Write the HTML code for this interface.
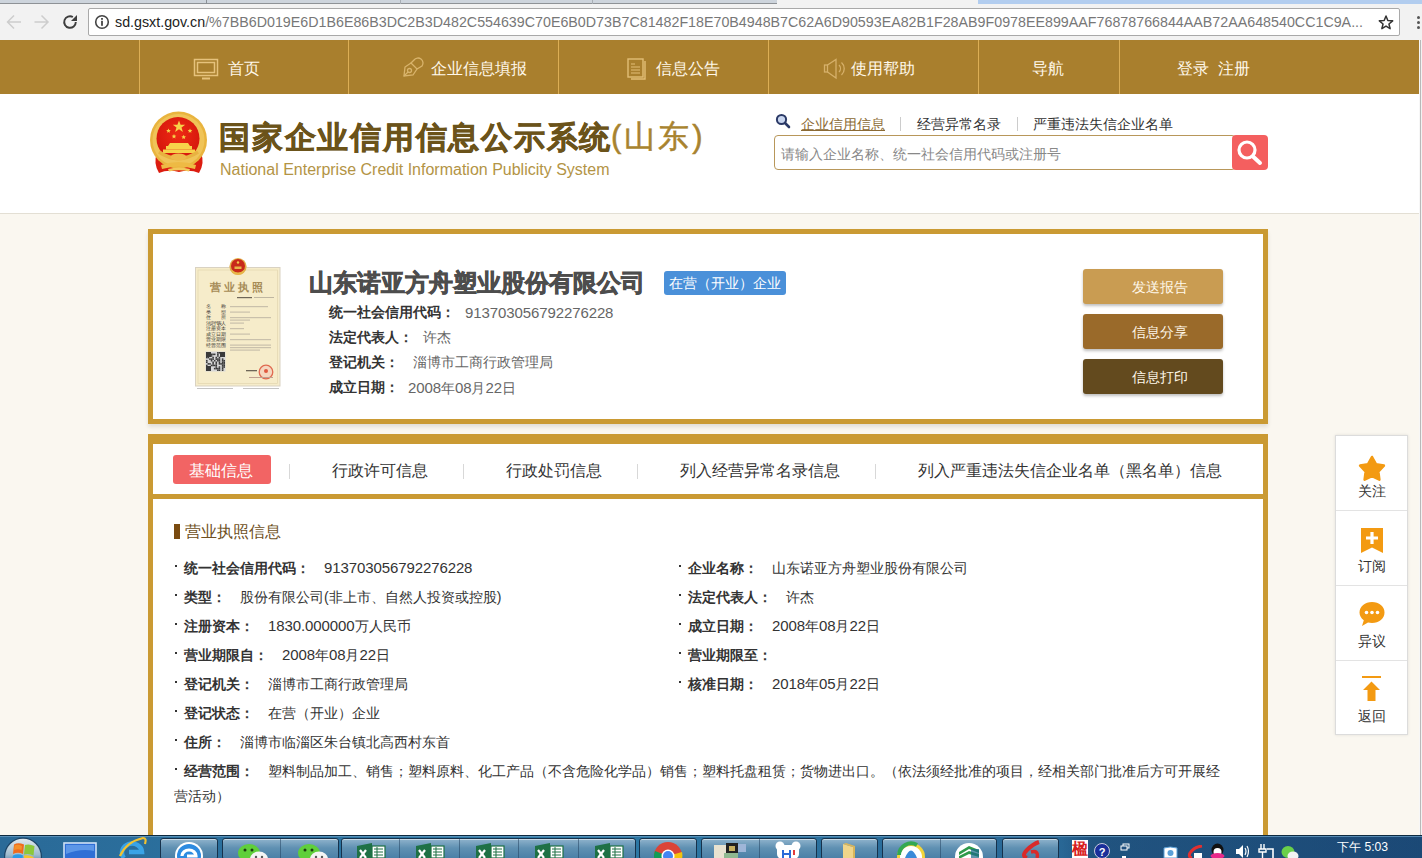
<!DOCTYPE html>
<html><head><meta charset="utf-8">
<style>
*{margin:0;padding:0;box-sizing:border-box}
html,body{width:1422px;height:858px;overflow:hidden}
body{position:relative;background:#faf7f0;font-family:"Liberation Sans",sans-serif;font-size:14px;color:#333}
.abs{position:absolute}
/* browser chrome */
#tabs{left:0;top:0;width:1422px;height:4px;background:#cdd4dc;border-bottom:1px solid #8e9296}
#tabs .act{position:absolute;left:777px;top:0;width:201px;height:4px;background:#f2f2f2}
#tabs .blue{position:absolute;left:978px;top:0;width:444px;height:4px;background:#b2cdef}
#toolbar{left:0;top:4px;width:1422px;height:36px;background:#f2f2f2}
#addr{left:88px;top:8px;width:1312px;height:28px;background:#fff;border:1px solid #a9a9a9;border-radius:2px}
#url{left:115px;top:13px;font-size:15px;color:#222;white-space:nowrap;transform-origin:0 0;transform:scaleX(0.951)}
#url span{color:#777}
/* nav */
#nav{left:0;top:40px;width:1419px;height:54px;background:#a97f2d}
#nav .sep{position:absolute;top:0;width:1px;height:54px;background:#dcae55}
#nav .it{position:absolute;top:2px;height:54px;line-height:54px;font-size:16px;color:#fff8ea;white-space:nowrap}
#scroll{left:1419px;top:40px;width:3px;height:795px;background:linear-gradient(90deg,#f7f7f7 0 1px,#b8b8b8 1px 2px,#f2f2f2 2px)}
/* header */
#hdr{left:0;top:94px;width:1419px;height:120px;background:#fff;border-bottom:1px solid #e3dfd4}
/* cards */
.card{position:absolute;left:148px;width:1120px;background:#fff;border:5px solid #ca9a33;box-shadow:0 3px 4px rgba(0,0,0,0.1)}
.lbl{position:absolute;font-weight:bold;color:#333;white-space:nowrap}
.val{position:absolute;color:#666;white-space:nowrap}
.dg{font-size:15px;letter-spacing:-0.1px}
.btn{position:absolute;left:1083px;width:140px;height:35px;border-radius:3px;color:#fff8ea;font-size:14px;line-height:35px;padding-top:1px;padding-left:49px;box-shadow:0 2px 3px rgba(0,0,0,0.25)}
.tab{position:absolute;top:456px;height:29px;line-height:29px;font-size:16px;color:#333;white-space:nowrap}
.tsep{position:absolute;top:464px;width:1px;height:15px;background:#d8d8d8}
.row{position:absolute;height:20px;line-height:20px;white-space:nowrap;font-size:14px}
.row b{color:#333}
.row i{font-style:normal;color:#333}
.dot{position:absolute;width:2px;height:2px;background:#333}
/* side toolbar */
#side{left:1335px;top:435px;width:73px;height:300px;background:#fff;border:1px solid #dcdcdc;box-shadow:0 0 3px rgba(0,0,0,0.1)}
#side .c{position:absolute;left:0;width:71px;height:75px;text-align:center}
#side .c span{position:absolute;left:0;width:71px;top:47px;font-size:14px;color:#333}
#side .ln{position:absolute;left:0;width:71px;height:1px;background:#e3e3e3}
/* taskbar */
#task{left:0;top:835px;width:1422px;height:23px;background:linear-gradient(90deg,#2a6a98,#2d7aa6 40%,#2a6a98 70%,#1f5585);border-top:1px solid #0d2a40}
</style></head><body>

<div id="tabs" class="abs"><div class="act"></div><div class="blue"></div><div style="position:absolute;left:206px;top:0;width:1px;height:4px;background:#8a9096"></div><div style="position:absolute;left:400px;top:0;width:1px;height:4px;background:#a8aeb5"></div><div style="position:absolute;left:592px;top:0;width:1px;height:4px;background:#a8aeb5"></div></div>
<div id="toolbar" class="abs"></div>
<!-- back / fwd / reload -->
<svg class="abs" style="left:5px;top:12px" width="80" height="22" viewBox="0 0 80 22">
  <g fill="none" stroke="#cdcdcd" stroke-width="1.5">
    <path d="M16 10H3M9 3.5L2.5 10L9 16.5"/>
    <path d="M29.5 10H43M36.5 3.5L43 10L36.5 16.5"/>
  </g>
  <path d="M70.8 10A5.8 5.8 0 1 1 67.9 4.98" fill="none" stroke="#3d3d3d" stroke-width="1.9"/>
  <path d="M72 3L72 9L66 9Z" fill="#3d3d3d"/>
</svg>
<div id="addr" class="abs"></div>
<svg class="abs" style="left:94px;top:14px" width="16" height="16" viewBox="0 0 16 16">
  <circle cx="8" cy="8" r="6.3" fill="none" stroke="#444" stroke-width="1.6"/>
  <rect x="7.1" y="6.8" width="1.8" height="5" fill="#444"/><rect x="7.1" y="4" width="1.8" height="1.8" fill="#444"/>
</svg>
<div id="url" class="abs">sd.gsxt.gov.cn<span>/%7BB6D019E6D1B6E86B3DC2B3D482C554639C70E6B0D73B7C81482F18E70B4948B7C62A6D90593EA82B1F28AB9F0978EE899AAF76878766844AAB72AA648540CC1C9A...</span></div>
<svg class="abs" style="left:1377px;top:13px" width="18" height="18" viewBox="0 0 18 18">
  <path d="M9.00 3.00L10.82 7.49L15.66 7.84L11.95 10.96L13.11 15.66L9.00 13.10L4.89 15.66L6.05 10.96L2.34 7.84L7.18 7.49Z" fill="none" stroke="#333" stroke-width="1.5" stroke-linejoin="round"/>
</svg>

<!-- NAV -->
<div class="abs" style="left:1417px;top:16px;width:3px;height:3px;background:#555;border-radius:50%"></div><div class="abs" style="left:1417px;top:21px;width:3px;height:3px;background:#555;border-radius:50%"></div><div class="abs" style="left:1417px;top:26px;width:3px;height:3px;background:#555;border-radius:50%"></div>
<div id="nav" class="abs">
  <div class="sep" style="left:139px"></div>
  <div class="sep" style="left:348px"></div>
  <div class="sep" style="left:558px"></div>
  <div class="sep" style="left:768px"></div>
  <div class="sep" style="left:978px"></div>
  <div class="sep" style="left:1119px"></div>
  <div class="it" style="left:228px">首页</div>
  <div class="it" style="left:431px">企业信息填报</div>
  <div class="it" style="left:656px">信息公告</div>
  <div class="it" style="left:851px">使用帮助</div>
  <div class="it" style="left:1032px">导航</div>
  <div class="it" style="left:1177px">登录&nbsp; 注册</div>
</div>
<div id="scroll" class="abs"></div>
<svg class="abs" style="left:192px;top:57px" width="28" height="24" viewBox="0 0 28 24" fill="none" stroke="#e6c27c" stroke-width="1.5">
  <rect x="2.5" y="2.5" width="23" height="16"/><rect x="5.5" y="5.5" width="17" height="10"/><path d="M10 21.5H18" stroke-width="2"/>
</svg>
<svg class="abs" style="left:402px;top:56px" width="26" height="24" viewBox="0 0 26 24" fill="none" stroke="#d9b46c" stroke-width="1.3">
  <path d="M9 7L3 11L2 20L11 19L15 13"/><circle cx="7.5" cy="14.5" r="2"/><path d="M2 20L6 16"/><path d="M12 4A5 5 0 0 1 20 10L15 13L9 7Z"/>
</svg>
<svg class="abs" style="left:625px;top:57px" width="22" height="24" viewBox="0 0 22 24" fill="none" stroke="#e2be76" stroke-width="1.4">
  <rect x="3" y="2" width="15" height="18"/><path d="M20 4V22H6" /><path d="M6 7H10M6 10H15M6 13H15M6 16H15" stroke-width="1"/>
</svg>
<svg class="abs" style="left:823px;top:57px" width="24" height="24" viewBox="0 0 24 24" fill="none" stroke="#d6b06a" stroke-width="1.3">
  <rect x="1.5" y="8" width="3" height="7"/><path d="M4.5 8L13 2.5V21L4.5 15"/><path d="M16 8A5 5 0 0 1 16 15M18.5 5.5A8.5 8.5 0 0 1 18.5 18"/>
</svg>

<!-- HEADER -->
<div id="hdr" class="abs"></div>
<svg class="abs" style="left:148px;top:109px" width="62" height="68" viewBox="0 0 62 68">
  <defs>
    <radialGradient id="rg" cx="50%" cy="40%" r="60%"><stop offset="0" stop-color="#ee2a14"/><stop offset="1" stop-color="#d4160c"/></radialGradient>
  </defs>
  <path d="M9 44 Q5 54 11 64 Q20 60 31 63 Q42 60 51 64 Q57 54 53 44 Z" fill="#dc1c10"/>
  <circle cx="30.5" cy="31" r="28.5" fill="#e9b43e"/>
  <circle cx="30.5" cy="31" r="26" fill="#f0c458"/>
  <circle cx="30" cy="29.5" r="21.5" fill="url(#rg)"/>
  <g fill="#f7d24a">
    <path d="M31 11.5l1.6 4.3h4.6l-3.7 2.7 1.4 4.4-3.9-2.7-3.9 2.7 1.4-4.4-3.7-2.7h4.6z"/>
    <path d="M20.5 19.4l0.7 1.5 1.6 0.2-1.2 1.1 0.3 1.6-1.4-0.8-1.4 0.8 0.3-1.6-1.2-1.1 1.6-0.2z"/>
    <path d="M26 25l0.7 1.5 1.6 0.2-1.2 1.1 0.3 1.6-1.4-0.8-1.4 0.8 0.3-1.6-1.2-1.1 1.6-0.2z"/>
    <path d="M35.7 25.7l0.7 1.5 1.6 0.2-1.2 1.1 0.3 1.6-1.4-0.8-1.4 0.8 0.3-1.6-1.2-1.1 1.6-0.2z"/>
    <path d="M42 19.4l0.7 1.5 1.6 0.2-1.2 1.1 0.3 1.6-1.4-0.8-1.4 0.8 0.3-1.6-1.2-1.1 1.6-0.2z"/>
    <path d="M22 34 H40 L42 37 H20 Z"/>
    <rect x="18" y="37" width="26" height="3.5"/>
    <rect x="15" y="40.5" width="32" height="3.5"/>
  </g>
  <path d="M11 43 Q30 56 50 43" fill="none" stroke="#e8b240" stroke-width="3.5"/>
  <ellipse cx="30.5" cy="48" rx="8" ry="3.5" fill="#eeb94a"/>
  <path d="M13 56 Q31 50 48 56 L47 60 Q31 55 14 60 Z" fill="#eeba44"/>
  <path d="M20 60 Q31 57 42 60 L41 62.5 Q31 60 21 62.5Z" fill="#f3c85a"/>
</svg>
<div class="abs" id="ttl" style="left:219px;top:117px;font-size:31px;font-weight:bold;color:#6b531a;-webkit-text-stroke:0.6px #6b531a;white-space:nowrap;letter-spacing:1.75px">国家企业信用信息公示系统</div><div class="abs" id="ttl2" style="left:611px;top:116px;font-size:31px;color:#a8832f;white-space:nowrap;letter-spacing:3px;-webkit-text-stroke:0.5px #a8832f">(山东)</div>
<div class="abs" id="ettl" style="left:220px;top:161px;font-size:16px;color:#b39445;white-space:nowrap">National Enterprise Credit Information Publicity System</div>
<svg class="abs" style="left:775px;top:113px" width="16" height="16" viewBox="0 0 16 16">
  <circle cx="6.5" cy="6.5" r="4.6" fill="#c9d6ef" stroke="#2b3a67" stroke-width="2"/>
  <path d="M10 10L14 14" stroke="#2b3a67" stroke-width="2.6" stroke-linecap="round"/>
</svg>
<div class="abs" style="left:801px;top:116px;font-size:14px;color:#8b6a34;text-decoration:underline;white-space:nowrap">企业信用信息</div>
<div class="abs" style="left:900px;top:117px;width:1px;height:14px;background:#ccc"></div>
<div class="abs" style="left:917px;top:116px;font-size:14px;color:#333;white-space:nowrap">经营异常名录</div>
<div class="abs" style="left:1017px;top:117px;width:1px;height:14px;background:#ccc"></div>
<div class="abs" style="left:1033px;top:116px;font-size:14px;color:#333;white-space:nowrap">严重违法失信企业名单</div>
<div class="abs" style="left:774px;top:135px;width:462px;height:35px;border:1px solid #b8975a;border-radius:4px;background:#fff"></div>
<div class="abs" style="left:781px;top:146px;font-size:14px;color:#888;white-space:nowrap">请输入企业名称、统一社会信用代码或注册号</div>
<div class="abs" style="left:1232px;top:135px;width:36px;height:35px;background:#f45f5f;border-radius:4px"></div>
<svg class="abs" style="left:1235px;top:138px" width="30" height="30" viewBox="0 0 30 30">
  <circle cx="12" cy="12" r="8" fill="none" stroke="#fff" stroke-width="3.2"/>
  <path d="M18 18.5L25 25" stroke="#fff" stroke-width="4" stroke-linecap="round"/>
</svg>

<!-- CARD 1 -->
<div class="card" style="top:229px;height:195px"></div>
<!-- license image -->
<svg class="abs" style="left:193px;top:255px" width="92" height="138" viewBox="0 0 92 138" font-family="Liberation Sans, sans-serif">
  <rect x="2.5" y="12.5" width="84.5" height="118.5" fill="#f6ecca" stroke="#d9d2c2" stroke-width="1"/>
  <rect x="5" y="15" width="79.5" height="113.5" fill="none" stroke="#e3d6b0" stroke-width="0.7"/>
  <circle cx="45" cy="11.5" r="8.6" fill="#e2ae48"/>
  <circle cx="45" cy="11" r="7" fill="#c82a1a"/>
  <path d="M39 15Q45 20 51 15L50.5 18Q45 21.5 39.5 18Z" fill="#e8b648"/>
  <rect x="41.5" y="11.5" width="7" height="2.5" fill="#e8b648"/>
  <circle cx="45" cy="7.5" r="1.2" fill="#f2c84a"/>
  <text x="45" y="36" font-size="10.5" fill="#a58a55" text-anchor="middle" letter-spacing="3.2" font-weight="bold">营业执照</text>
  <rect x="44" y="42" width="15" height="1.2" fill="#6e6658"/><rect x="61" y="42" width="20" height="0.9" fill="#b9b09c"/>
  <text x="13" y="53.0" font-size="4.6" fill="#3a3530" textLength="20" lengthAdjust="spacing">名　　称</text><text x="13" y="58.5" font-size="4.6" fill="#3a3530" textLength="20" lengthAdjust="spacing">类　　型</text><text x="13" y="64.0" font-size="4.6" fill="#3a3530" textLength="20" lengthAdjust="spacing">住　　所</text><text x="13" y="69.5" font-size="4.6" fill="#3a3530" textLength="20" lengthAdjust="spacing">法定代表人</text><text x="13" y="75.0" font-size="4.6" fill="#3a3530" textLength="20" lengthAdjust="spacing">注册资本</text><text x="13" y="80.5" font-size="4.6" fill="#3a3530" textLength="20" lengthAdjust="spacing">成立日期</text><text x="13" y="86.0" font-size="4.6" fill="#3a3530" textLength="20" lengthAdjust="spacing">营业期限</text><text x="13" y="91.5" font-size="4.6" fill="#3a3530" textLength="20" lengthAdjust="spacing">经营范围</text>
  <g fill="#c9c0ab">
    <rect x="37" y="51" width="38" height="1.2"/><rect x="37" y="56.5" width="20" height="1.2"/><rect x="37" y="62" width="41" height="1.2"/><rect x="37" y="64.5" width="20" height="1.2"/><rect x="37" y="67.5" width="14" height="1.2"/>
    <rect x="37" y="73" width="14" height="1.2"/><rect x="37" y="78.5" width="20" height="1.2"/><rect x="37" y="84" width="41" height="1.2"/><rect x="37" y="89.5" width="41" height="1.2"/><rect x="37" y="92" width="41" height="1.2"/><rect x="37" y="94.5" width="30" height="1.2"/>
  </g>
  <rect x="12.5" y="96.5" width="20" height="20" fill="#d8d8d8"/>
  <g fill="#3a3a3a"><rect x="13.00" y="97.00" width="1.58" height="1.58"/><rect x="13.00" y="98.58" width="1.58" height="1.58"/><rect x="13.00" y="101.75" width="1.58" height="1.58"/><rect x="13.00" y="104.92" width="1.58" height="1.58"/><rect x="13.00" y="106.50" width="1.58" height="1.58"/><rect x="13.00" y="109.67" width="1.58" height="1.58"/><rect x="13.00" y="111.25" width="1.58" height="1.58"/><rect x="13.00" y="112.83" width="1.58" height="1.58"/><rect x="13.00" y="114.42" width="1.58" height="1.58"/><rect x="14.58" y="97.00" width="1.58" height="1.58"/><rect x="14.58" y="100.17" width="1.58" height="1.58"/><rect x="14.58" y="101.75" width="1.58" height="1.58"/><rect x="14.58" y="108.08" width="1.58" height="1.58"/><rect x="14.58" y="111.25" width="1.58" height="1.58"/><rect x="14.58" y="114.42" width="1.58" height="1.58"/><rect x="16.17" y="97.00" width="1.58" height="1.58"/><rect x="16.17" y="98.58" width="1.58" height="1.58"/><rect x="16.17" y="100.17" width="1.58" height="1.58"/><rect x="16.17" y="103.33" width="1.58" height="1.58"/><rect x="16.17" y="108.08" width="1.58" height="1.58"/><rect x="16.17" y="111.25" width="1.58" height="1.58"/><rect x="16.17" y="112.83" width="1.58" height="1.58"/><rect x="16.17" y="114.42" width="1.58" height="1.58"/><rect x="17.75" y="98.58" width="1.58" height="1.58"/><rect x="17.75" y="100.17" width="1.58" height="1.58"/><rect x="17.75" y="103.33" width="1.58" height="1.58"/><rect x="17.75" y="104.92" width="1.58" height="1.58"/><rect x="17.75" y="109.67" width="1.58" height="1.58"/><rect x="19.33" y="98.58" width="1.58" height="1.58"/><rect x="19.33" y="101.75" width="1.58" height="1.58"/><rect x="19.33" y="103.33" width="1.58" height="1.58"/><rect x="19.33" y="106.50" width="1.58" height="1.58"/><rect x="19.33" y="108.08" width="1.58" height="1.58"/><rect x="19.33" y="109.67" width="1.58" height="1.58"/><rect x="20.92" y="98.58" width="1.58" height="1.58"/><rect x="20.92" y="104.92" width="1.58" height="1.58"/><rect x="20.92" y="109.67" width="1.58" height="1.58"/><rect x="20.92" y="112.83" width="1.58" height="1.58"/><rect x="22.50" y="101.75" width="1.58" height="1.58"/><rect x="22.50" y="103.33" width="1.58" height="1.58"/><rect x="22.50" y="106.50" width="1.58" height="1.58"/><rect x="22.50" y="108.08" width="1.58" height="1.58"/><rect x="22.50" y="109.67" width="1.58" height="1.58"/><rect x="22.50" y="111.25" width="1.58" height="1.58"/><rect x="22.50" y="112.83" width="1.58" height="1.58"/><rect x="24.08" y="97.00" width="1.58" height="1.58"/><rect x="24.08" y="98.58" width="1.58" height="1.58"/><rect x="24.08" y="100.17" width="1.58" height="1.58"/><rect x="24.08" y="103.33" width="1.58" height="1.58"/><rect x="24.08" y="104.92" width="1.58" height="1.58"/><rect x="24.08" y="112.83" width="1.58" height="1.58"/><rect x="24.08" y="114.42" width="1.58" height="1.58"/><rect x="25.67" y="97.00" width="1.58" height="1.58"/><rect x="25.67" y="101.75" width="1.58" height="1.58"/><rect x="25.67" y="103.33" width="1.58" height="1.58"/><rect x="25.67" y="104.92" width="1.58" height="1.58"/><rect x="25.67" y="106.50" width="1.58" height="1.58"/><rect x="25.67" y="108.08" width="1.58" height="1.58"/><rect x="25.67" y="111.25" width="1.58" height="1.58"/><rect x="25.67" y="112.83" width="1.58" height="1.58"/><rect x="25.67" y="114.42" width="1.58" height="1.58"/><rect x="27.25" y="97.00" width="1.58" height="1.58"/><rect x="27.25" y="108.08" width="1.58" height="1.58"/><rect x="28.83" y="97.00" width="1.58" height="1.58"/><rect x="28.83" y="98.58" width="1.58" height="1.58"/><rect x="28.83" y="100.17" width="1.58" height="1.58"/><rect x="28.83" y="103.33" width="1.58" height="1.58"/><rect x="28.83" y="104.92" width="1.58" height="1.58"/><rect x="28.83" y="106.50" width="1.58" height="1.58"/><rect x="28.83" y="108.08" width="1.58" height="1.58"/><rect x="28.83" y="109.67" width="1.58" height="1.58"/><rect x="28.83" y="111.25" width="1.58" height="1.58"/><rect x="28.83" y="112.83" width="1.58" height="1.58"/><rect x="28.83" y="114.42" width="1.58" height="1.58"/><rect x="30.42" y="97.00" width="1.58" height="1.58"/><rect x="30.42" y="98.58" width="1.58" height="1.58"/><rect x="30.42" y="100.17" width="1.58" height="1.58"/><rect x="30.42" y="104.92" width="1.58" height="1.58"/><rect x="30.42" y="106.50" width="1.58" height="1.58"/><rect x="30.42" y="108.08" width="1.58" height="1.58"/><rect x="30.42" y="109.67" width="1.58" height="1.58"/><rect x="30.42" y="111.25" width="1.58" height="1.58"/><rect x="13" y="97" width="5" height="5"/><rect x="27" y="97" width="5" height="5"/><rect x="13" y="111" width="5" height="5"/></g>
  <circle cx="73" cy="117" r="6.8" fill="#f5d8c0" stroke="#e06a50" stroke-width="1.3"/><circle cx="73" cy="116" r="2" fill="#e05a40"/>
  <rect x="53" y="115" width="11" height="1.3" fill="#6e6658"/><rect x="56" y="122" width="24" height="1" fill="#c0a090"/>
  <rect x="4" y="133" width="36" height="1" fill="#c4c4c4"/><rect x="50" y="133" width="36" height="1" fill="#c4c4c4"/>
</svg>
<div class="abs" id="cname" style="left:309px;top:267px;font-size:24px;font-weight:bold;color:#4d4d4d;-webkit-text-stroke:0.7px #4d4d4d;white-space:nowrap">山东诺亚方舟塑业股份有限公司</div>
<div class="abs" style="left:664px;top:271px;width:122px;height:24px;background:#4a90d9;border-radius:3px;color:#fff;font-size:14px;line-height:24px;padding-left:5px;white-space:nowrap">在营（开业）企业</div>
<div class="lbl" style="left:329px;top:304px">统一社会信用代码：</div><div class="val dg" style="left:465px;top:304px">913703056792276228</div>
<div class="lbl" style="left:329px;top:329px">法定代表人：</div><div class="val" style="left:423px;top:329px">许杰</div>
<div class="lbl" style="left:329px;top:354px">登记机关：</div><div class="val" style="left:413px;top:354px">淄博市工商行政管理局</div>
<div class="lbl" style="left:329px;top:379px">成立日期：</div><div class="val" style="left:408px;top:379px"><span class="dg">2008</span>年<span class="dg">08</span>月<span class="dg">22</span>日</div>
<div class="btn" style="top:269px;background:#c99c52">发送报告</div>
<div class="btn" style="top:314px;background:#9a6a2a">信息分享</div>
<div class="btn" style="top:359px;background:#634a1e">信息打印</div>

<!-- CARD 2 -->
<div class="card" style="top:434px;height:430px;border-top-width:10px;box-shadow:none"></div>
<div class="abs" style="left:153px;top:494px;width:1110px;height:5px;background:#ca9a33"></div>
<div class="abs" style="left:173px;top:455px;width:98px;height:29px;background:#f26464;border-radius:3px"></div>
<div class="tab" style="left:189px;color:#fff">基础信息</div>
<div class="tsep" style="left:289px"></div>
<div class="tab" style="left:332px">行政许可信息</div>
<div class="tsep" style="left:463px"></div>
<div class="tab" style="left:506px">行政处罚信息</div>
<div class="tsep" style="left:637px"></div>
<div class="tab" style="left:680px">列入经营异常名录信息</div>
<div class="tsep" style="left:875px"></div>
<div class="tab" style="left:918px">列入严重违法失信企业名单（黑名单）信息</div>
<div class="abs" style="left:174px;top:524px;width:6px;height:15px;background:#7a4b10"></div>
<div class="abs" style="left:185px;top:522px;font-size:16px;color:#6e4f22;white-space:nowrap">营业执照信息</div>
<div class="dot" style="left:175px;top:565px"></div><div class="row" style="left:184px;top:558px"><b>统一社会信用代码：</b></div><div class="row" style="left:324px;top:558px"><i><span class="dg">913703056792276228</span></i></div><div class="dot" style="left:679px;top:565px"></div><div class="row" style="left:688px;top:558px"><b>企业名称：</b></div><div class="row" style="left:772px;top:558px"><i>山东诺亚方舟塑业股份有限公司</i></div>
<div class="dot" style="left:175px;top:594px"></div><div class="row" style="left:184px;top:587px"><b>类型：</b></div><div class="row" style="left:240px;top:587px"><i>股份有限公司(非上市、自然人投资或控股)</i></div><div class="dot" style="left:679px;top:594px"></div><div class="row" style="left:688px;top:587px"><b>法定代表人：</b></div><div class="row" style="left:786px;top:587px"><i>许杰</i></div>
<div class="dot" style="left:175px;top:623px"></div><div class="row" style="left:184px;top:616px"><b>注册资本：</b></div><div class="row" style="left:268px;top:616px"><i><span class="dg">1830.000000</span>万人民币</i></div><div class="dot" style="left:679px;top:623px"></div><div class="row" style="left:688px;top:616px"><b>成立日期：</b></div><div class="row" style="left:772px;top:616px"><i><span class="dg">2008</span>年<span class="dg">08</span>月<span class="dg">22</span>日</i></div>
<div class="dot" style="left:175px;top:652px"></div><div class="row" style="left:184px;top:645px"><b>营业期限自：</b></div><div class="row" style="left:282px;top:645px"><i><span class="dg">2008</span>年<span class="dg">08</span>月<span class="dg">22</span>日</i></div><div class="dot" style="left:679px;top:652px"></div><div class="row" style="left:688px;top:645px"><b>营业期限至：</b></div>
<div class="dot" style="left:175px;top:681px"></div><div class="row" style="left:184px;top:674px"><b>登记机关：</b></div><div class="row" style="left:268px;top:674px"><i>淄博市工商行政管理局</i></div><div class="dot" style="left:679px;top:681px"></div><div class="row" style="left:688px;top:674px"><b>核准日期：</b></div><div class="row" style="left:772px;top:674px"><i><span class="dg">2018</span>年<span class="dg">05</span>月<span class="dg">22</span>日</i></div>
<div class="dot" style="left:175px;top:710px"></div><div class="row" style="left:184px;top:703px"><b>登记状态：</b></div><div class="row" style="left:268px;top:703px"><i>在营（开业）企业</i></div>
<div class="dot" style="left:175px;top:739px"></div><div class="row" style="left:184px;top:732px"><b>住所：</b></div><div class="row" style="left:240px;top:732px"><i>淄博市临淄区朱台镇北高西村东首</i></div>
<div class="dot" style="left:175px;top:768px"></div><div class="row" style="left:184px;top:761px"><b>经营范围：</b></div><div class="row" style="left:268px;top:761px"><i>塑料制品加工、销售；塑料原料、化工产品（不含危险化学品）销售；塑料托盘租赁；货物进出口。（依法须经批准的项目，经相关部门批准后方可开展经</i></div>
<div class="row" style="left:174px;top:786px"><i>营活动）</i></div>


<!-- SIDE -->
<div id="side" class="abs">
  <div class="c" style="top:0"><svg style="position:absolute;left:21px;top:18px" width="30" height="28" viewBox="0 0 30 28"><path d="M15.00 3.00L18.88 10.16L26.89 11.64L21.28 17.54L22.35 25.61L15.00 22.10L7.65 25.61L8.72 17.54L3.11 11.64L11.12 10.16Z" fill="#f39a12" stroke="#f39a12" stroke-width="2.6" stroke-linejoin="round"/></svg><span>关注</span></div>
  <div class="ln" style="top:74px"></div>
  <div class="c" style="top:75px"><svg style="position:absolute;left:24px;top:16px" width="24" height="28" viewBox="0 0 24 28"><path d="M1 1H23V26L12 20.5L1 26Z" fill="#f39a12"/><path d="M12 5V17M6 11H18" stroke="#fff" stroke-width="3.2"/></svg><span>订阅</span></div>
  <div class="ln" style="top:149px"></div>
  <div class="c" style="top:150px"><svg style="position:absolute;left:22px;top:14px" width="28" height="28" viewBox="0 0 28 28"><path d="M14 2C21 2 26.5 6.6 26.5 12.5S21 23 14 23C12.6 23 11.3 22.8 10 22.5L4 26L5.8 20.2C3.2 18.3 1.5 15.6 1.5 12.5C1.5 6.6 7 2 14 2Z" fill="#f39a12"/><circle cx="8.5" cy="12.5" r="1.8" fill="#fff"/><circle cx="14" cy="12.5" r="1.8" fill="#fff"/><circle cx="19.5" cy="12.5" r="1.8" fill="#fff"/></svg><span>异议</span></div>
  <div class="ln" style="top:224px"></div>
  <div class="c" style="top:225px"><svg style="position:absolute;left:23px;top:14px" width="26" height="28" viewBox="0 0 26 28"><path d="M3 2H22" stroke="#f39a12" stroke-width="2"/><path d="M12.5 6.5L21 15H16.5V26H8.5V15H4Z" fill="#f39a12"/></svg><span>返回</span></div>
</div>

<!-- TASKBAR -->
<div id="task" class="abs"></div>
<div class="abs" style="left:0;top:836px;width:1422px;height:1px;background:#6da0c4;opacity:0.7"></div>
<div class="abs" style="left:1062px;top:837px;width:360px;height:21px;background:linear-gradient(90deg,rgba(20,50,90,0) 0,rgba(20,50,90,0.35) 30px)"></div>
<!-- start orb -->
<svg class="abs" style="left:3px;top:836px" width="42" height="22" viewBox="0 0 42 22">
  <defs><linearGradient id="og" x1="0" y1="0" x2="0" y2="1"><stop offset="0" stop-color="#dfe8ee"/><stop offset="0.45" stop-color="#9fbccf"/><stop offset="0.75" stop-color="#2f6f9f"/><stop offset="1" stop-color="#1b4f7f"/></linearGradient></defs>
  <circle cx="20" cy="20.5" r="19" fill="#1d4466"/>
  <circle cx="20" cy="20.5" r="17.8" fill="url(#og)"/>
  <path d="M11 8.5Q15 6 21 8.5L20 18Q15 15.5 10 18Z" fill="#f06a1c"/>
  <path d="M11.5 9.5Q15 8 19 10L18.5 14Q15 12.5 11 14Z" fill="#f7a030" opacity="0.7"/>
  <path d="M22 9Q26 7.5 31.5 10L30.5 19.5Q26 17 21 18.5Z" fill="#8cc83a"/>
  <path d="M10 19.5Q15 17 20 19.5L19.5 22H9.5Z" fill="#2a9ae8"/>
  <path d="M21 19.5Q26 18.5 30.5 21L30.5 22H21Z" fill="#f4c42a"/>
</svg>
<svg class="abs" style="left:63px;top:842px" width="34" height="16" viewBox="0 0 34 16">
  <rect x="1" y="1" width="32" height="16" fill="#2f6fd6" stroke="#cfe2f5" stroke-width="1.6"/>
  <path d="M3 3H31V9Q18 6 3 12Z" fill="#6fa8ef" opacity="0.7"/>
</svg>
<svg class="abs" style="left:116px;top:836px" width="32" height="22" viewBox="0 0 32 22">
  <path d="M8 22A10 9 0 1 1 26 16H13" fill="none" stroke="#3aa3e6" stroke-width="4.5"/>
  <path d="M4 20Q10 6 27 2Q31 2 29 8" fill="none" stroke="#f2c230" stroke-width="2.2"/>
</svg>
<div class="abs" style="left:160px;top:838px;width:58px;height:22px;border:1px solid #16324c;border-radius:3px;background:linear-gradient(#8fb3cc,#5f90b2 45%,#4a7fa6);box-shadow:inset 0 1px 0 rgba(255,255,255,0.5)"></div><div class="abs" style="left:222px;top:838px;width:117px;height:22px;border:1px solid #16324c;border-radius:3px;background:linear-gradient(#8fb3cc,#5f90b2 45%,#4a7fa6);box-shadow:inset 0 1px 0 rgba(255,255,255,0.5)"></div><div class="abs" style="left:280px;top:839px;width:1px;height:19px;background:rgba(30,60,90,0.5)"></div><div class="abs" style="left:341px;top:838px;width:295px;height:22px;border:1px solid #16324c;border-radius:3px;background:linear-gradient(#8fb3cc,#5f90b2 45%,#4a7fa6);box-shadow:inset 0 1px 0 rgba(255,255,255,0.5)"></div><div class="abs" style="left:399px;top:839px;width:1px;height:19px;background:rgba(30,60,90,0.5)"></div><div class="abs" style="left:459px;top:839px;width:1px;height:19px;background:rgba(30,60,90,0.5)"></div><div class="abs" style="left:518px;top:839px;width:1px;height:19px;background:rgba(30,60,90,0.5)"></div><div class="abs" style="left:578px;top:839px;width:1px;height:19px;background:rgba(30,60,90,0.5)"></div><div class="abs" style="left:639px;top:838px;width:58px;height:22px;border:1px solid #16324c;border-radius:3px;background:linear-gradient(#8fb3cc,#5f90b2 45%,#4a7fa6);box-shadow:inset 0 1px 0 rgba(255,255,255,0.5)"></div><div class="abs" style="left:701px;top:838px;width:116px;height:22px;border:1px solid #16324c;border-radius:3px;background:linear-gradient(#8fb3cc,#5f90b2 45%,#4a7fa6);box-shadow:inset 0 1px 0 rgba(255,255,255,0.5)"></div><div class="abs" style="left:759px;top:839px;width:1px;height:19px;background:rgba(30,60,90,0.5)"></div><div class="abs" style="left:821px;top:838px;width:57px;height:22px;border:1px solid #16324c;border-radius:3px;background:linear-gradient(#8fb3cc,#5f90b2 45%,#4a7fa6);box-shadow:inset 0 1px 0 rgba(255,255,255,0.5)"></div><div class="abs" style="left:882px;top:838px;width:115px;height:22px;border:1px solid #16324c;border-radius:3px;background:linear-gradient(#8fb3cc,#5f90b2 45%,#4a7fa6);box-shadow:inset 0 1px 0 rgba(255,255,255,0.5)"></div><div class="abs" style="left:940px;top:839px;width:1px;height:19px;background:rgba(30,60,90,0.5)"></div><div class="abs" style="left:1002px;top:838px;width:57px;height:22px;border:1px solid #16324c;border-radius:3px;background:linear-gradient(#8fb3cc,#5f90b2 45%,#4a7fa6);box-shadow:inset 0 1px 0 rgba(255,255,255,0.5)"></div>
<svg class="abs" style="left:174px;top:841px" width="30" height="17" viewBox="0 0 30 17"><circle cx="15" cy="15" r="14" fill="#fff"/><circle cx="15" cy="15" r="12" fill="#2d8be0"/><path d="M8 15A7 6 0 0 1 22 15H13" fill="none" stroke="#fff" stroke-width="3.2"/></svg><svg class="abs" style="left:236px;top:842px" width="34" height="16" viewBox="0 0 34 16"><ellipse cx="13" cy="11" rx="11" ry="9" fill="#5fcf3a"/><circle cx="9" cy="8" r="1.5" fill="#1a3a10"/><circle cx="16" cy="8" r="1.5" fill="#1a3a10"/><ellipse cx="23" cy="17" rx="9" ry="7.5" fill="#f4f4f4"/><circle cx="20" cy="15" r="1.2" fill="#555"/><circle cx="26" cy="15" r="1.2" fill="#555"/></svg><svg class="abs" style="left:296px;top:842px" width="34" height="16" viewBox="0 0 34 16"><ellipse cx="13" cy="11" rx="11" ry="9" fill="#5fcf3a"/><circle cx="9" cy="8" r="1.5" fill="#1a3a10"/><circle cx="16" cy="8" r="1.5" fill="#1a3a10"/><ellipse cx="23" cy="17" rx="9" ry="7.5" fill="#f4f4f4"/><circle cx="20" cy="15" r="1.2" fill="#555"/><circle cx="26" cy="15" r="1.2" fill="#555"/></svg><svg class="abs" style="left:356px;top:842px" width="32" height="16" viewBox="0 0 32 16"><path d="M1 4L16 1V16H1Z" fill="#1e7145"/><rect x="16" y="4" width="13" height="12" fill="#fff" stroke="#1e7145" stroke-width="1.2"/><path d="M18 7H27M18 10H27M18 13H27M21 5V16" stroke="#1e7145" stroke-width="1"/><path d="M4 8L10 16M10 8L4 16" stroke="#fff" stroke-width="2.2"/></svg><svg class="abs" style="left:415px;top:842px" width="32" height="16" viewBox="0 0 32 16"><path d="M1 4L16 1V16H1Z" fill="#1e7145"/><rect x="16" y="4" width="13" height="12" fill="#fff" stroke="#1e7145" stroke-width="1.2"/><path d="M18 7H27M18 10H27M18 13H27M21 5V16" stroke="#1e7145" stroke-width="1"/><path d="M4 8L10 16M10 8L4 16" stroke="#fff" stroke-width="2.2"/></svg><svg class="abs" style="left:475px;top:842px" width="32" height="16" viewBox="0 0 32 16"><path d="M1 4L16 1V16H1Z" fill="#1e7145"/><rect x="16" y="4" width="13" height="12" fill="#fff" stroke="#1e7145" stroke-width="1.2"/><path d="M18 7H27M18 10H27M18 13H27M21 5V16" stroke="#1e7145" stroke-width="1"/><path d="M4 8L10 16M10 8L4 16" stroke="#fff" stroke-width="2.2"/></svg><svg class="abs" style="left:534px;top:842px" width="32" height="16" viewBox="0 0 32 16"><path d="M1 4L16 1V16H1Z" fill="#1e7145"/><rect x="16" y="4" width="13" height="12" fill="#fff" stroke="#1e7145" stroke-width="1.2"/><path d="M18 7H27M18 10H27M18 13H27M21 5V16" stroke="#1e7145" stroke-width="1"/><path d="M4 8L10 16M10 8L4 16" stroke="#fff" stroke-width="2.2"/></svg><svg class="abs" style="left:594px;top:842px" width="32" height="16" viewBox="0 0 32 16"><path d="M1 4L16 1V16H1Z" fill="#1e7145"/><rect x="16" y="4" width="13" height="12" fill="#fff" stroke="#1e7145" stroke-width="1.2"/><path d="M18 7H27M18 10H27M18 13H27M21 5V16" stroke="#1e7145" stroke-width="1"/><path d="M4 8L10 16M10 8L4 16" stroke="#fff" stroke-width="2.2"/></svg><svg class="abs" style="left:653px;top:841px" width="30" height="17" viewBox="0 0 30 17"><circle cx="15" cy="15" r="14" fill="#db4437"/><path d="M15 15L3 22A14 14 0 0 1 2 10Z" fill="#0f9d58"/><path d="M15 15L29 11A14 14 0 0 1 27 22Z" fill="#f4c20d"/><circle cx="15" cy="15" r="6.5" fill="#fff"/><circle cx="15" cy="15" r="5" fill="#4285f4"/></svg><svg class="abs" style="left:712px;top:841px" width="36" height="17" viewBox="0 0 36 17"><rect x="2" y="4" width="12" height="13" fill="#e8e2d0"/><rect x="14" y="2" width="12" height="10" fill="#222"/><rect x="17" y="5" width="6" height="5" fill="#c8b060"/><rect x="26" y="3" width="8" height="8" fill="#9fb6d8"/><rect x="12" y="12" width="14" height="5" fill="#8fb890"/></svg><svg class="abs" style="left:773px;top:841px" width="30" height="17" viewBox="0 0 30 17"><circle cx="7" cy="5" r="4.5" fill="#fff"/><circle cx="23" cy="5" r="4.5" fill="#fff"/><rect x="4" y="4" width="22" height="14" rx="5" fill="#fff"/><path d="M10 9V17M17 9V17M10 13H17" stroke="#2a6ad8" stroke-width="2"/><path d="M21 9V14" stroke="#e23a3a" stroke-width="2"/></svg><svg class="abs" style="left:834px;top:842px" width="30" height="16" viewBox="0 0 30 16"><path d="M9 2L19 5V16H9Z" fill="#f0d58a"/><path d="M9 2L12 1L21 4V16H19V5Z" fill="#d9b55a"/></svg><svg class="abs" style="left:895px;top:841px" width="32" height="17" viewBox="0 0 32 17"><circle cx="16" cy="16" r="14" fill="#f3d53a"/><circle cx="16" cy="16" r="11" fill="#fff"/><path d="M4 14A12 12 0 0 1 22 4" fill="none" stroke="#33a852" stroke-width="4"/><path d="M10 17Q16 2 22 17Z" fill="#3a8ad8"/></svg><svg class="abs" style="left:953px;top:841px" width="32" height="17" viewBox="0 0 32 17"><circle cx="16" cy="16" r="14" fill="#fff"/><path d="M6 11L16 5L26 9V12L16 8L6 14Z" fill="#2e9a4a"/><path d="M6 15L16 10L26 13V16L16 13L6 18Z" fill="#2e9a4a"/><rect x="18" y="8" width="8" height="9" fill="#1a6a8a" opacity="0.7"/></svg><svg class="abs" style="left:1015px;top:840px" width="30" height="18" viewBox="0 0 30 18"><path d="M24 2Q18 4 12 10Q6 16 12 18" fill="none" stroke="#d82a2a" stroke-width="4"/><path d="M16 12Q24 10 22 18" fill="none" stroke="#d82a2a" stroke-width="3.5"/></svg><div class="abs" style="left:1072px;top:840px;font-size:16px;font-weight:bold;color:#d81e1e;line-height:18px;background:#fff;height:18px;width:16px;overflow:hidden;text-align:center">楹</div><svg class="abs" style="left:1094px;top:843px" width="16" height="15" viewBox="0 0 16 15"><circle cx="8" cy="8" r="7.5" fill="#1a2e9a" stroke="#ccd" stroke-width="1"/><text x="8" y="12.5" font-size="11" font-weight="bold" fill="#fff" text-anchor="middle" font-family="Liberation Sans">?</text></svg><svg class="abs" style="left:1120px;top:843px" width="10" height="15" viewBox="0 0 10 15"><rect x="3" y="1" width="6" height="4" fill="none" stroke="#fff" stroke-width="1"/><rect x="1" y="3" width="6" height="4" fill="#1f4f7f" stroke="#fff" stroke-width="1"/><rect x="2" y="13" width="4" height="2" fill="#fff"/></svg><svg class="abs" style="left:1163px;top:846px" width="15" height="12" viewBox="0 0 15 12"><path d="M1 2Q7 0 14 2V12H1Z" fill="#fff" stroke="#5aa0d8"/><circle cx="7.5" cy="7" r="3" fill="#5aa0d8"/></svg><svg class="abs" style="left:1186px;top:845px" width="18" height="13" viewBox="0 0 18 13"><path d="M16 1Q8 2 4 8Q2 12 6 13" fill="none" stroke="#e23030" stroke-width="3"/><rect x="8" y="8" width="8" height="5" fill="#fff"/></svg><svg class="abs" style="left:1209px;top:843px" width="17" height="15" viewBox="0 0 17 15"><ellipse cx="8.5" cy="7" rx="6" ry="6.5" fill="#111"/><ellipse cx="8.5" cy="9" rx="4" ry="4" fill="#fff"/><ellipse cx="8.5" cy="13" rx="7" ry="3" fill="#e82a8a"/></svg><svg class="abs" style="left:1235px;top:844px" width="16" height="14" viewBox="0 0 16 14"><path d="M1 5H4L8 1V14L4 10H1Z" fill="#fff"/><path d="M10 4Q12 7 10 11M12 2Q15 7 12 13" fill="none" stroke="#fff" stroke-width="1.2"/></svg><svg class="abs" style="left:1258px;top:843px" width="16" height="15" viewBox="0 0 16 15"><path d="M3 1V6M6 1V6M1 6H8V9H1ZM4.5 9V15" stroke="#fff" stroke-width="1.4" fill="none"/><path d="M9 6H15V15" stroke="#fff" stroke-width="1.6" fill="none"/></svg><svg class="abs" style="left:1281px;top:844px" width="18" height="14" viewBox="0 0 18 14"><ellipse cx="7" cy="8" rx="6.5" ry="6" fill="#6ad04a"/><ellipse cx="12" cy="12" rx="5.5" ry="4.5" fill="#f2f2f2"/></svg><div class="abs" style="left:1337px;top:839px;font-size:12.2px;color:#fff;white-space:nowrap;line-height:16px">下午 5:03</div>

</body></html>
